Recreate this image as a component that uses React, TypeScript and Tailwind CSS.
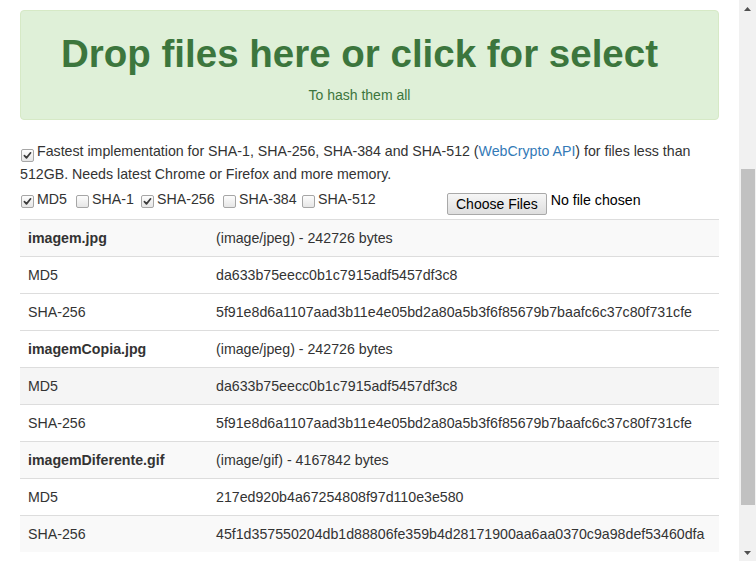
import React from 'react';

interface HashRow {
  label: string;
  value: string;
  bold?: boolean;
  bg?: string;
}

const rows: HashRow[] = [
  { label: 'imagem.jpg', value: '(image/jpeg) - 242726 bytes', bold: true, bg: 'bg-[#f9f9f9]' },
  { label: 'MD5', value: 'da633b75eecc0b1c7915adf5457df3c8' },
  { label: 'SHA-256', value: '5f91e8d6a1107aad3b11e4e05bd2a80a5b3f6f85679b7baafc6c37c80f731cfe' },
  { label: 'imagemCopia.jpg', value: '(image/jpeg) - 242726 bytes', bold: true },
  { label: 'MD5', value: 'da633b75eecc0b1c7915adf5457df3c8', bg: 'bg-[#f5f5f5]' },
  { label: 'SHA-256', value: '5f91e8d6a1107aad3b11e4e05bd2a80a5b3f6f85679b7baafc6c37c80f731cfe' },
  { label: 'imagemDiferente.gif', value: '(image/gif) - 4167842 bytes', bold: true, bg: 'bg-[#f9f9f9]' },
  { label: 'MD5', value: '217ed920b4a67254808f97d110e3e580' },
  { label: 'SHA-256', value: '45f1d357550204db1d88806fe359b4d28171900aa6aa0370c9a98def53460dfa', bg: 'bg-[#f9f9f9]' },
];

const algos = [
  { name: 'MD5', checked: true, width: 'w-[55px]' },
  { name: 'SHA-1', checked: false, width: 'w-[65px]' },
  { name: 'SHA-256', checked: true, width: 'w-[82px]' },
  { name: 'SHA-384', checked: false, width: 'w-[79px]' },
  { name: 'SHA-512', checked: false, width: 'w-[145px]' },
];

function Checkbox({ checked }: { checked: boolean }) {
  return (
    <span className="inline-flex items-center justify-center w-[13px] h-[13px] rounded-[2px] border border-[#a6a6a6] bg-gradient-to-b from-[#fdfdfd] to-[#e6e6e6] align-[-4px] shrink-0">
      {checked && (
        <svg width="9" height="9" viewBox="0 0 9 9">
          <path d="M1.4 4.6 L3.5 6.9 L7.6 1.8" fill="none" stroke="#3b3b3b" strokeWidth="1.7" strokeLinecap="round" strokeLinejoin="round" />
        </svg>
      )}
    </span>
  );
}

export default function App() {
  return (
    <div className="flex w-[756px] h-[561px] overflow-hidden bg-white text-[#333] text-[14.2px] font-['Liberation_Sans',Arial,sans-serif]">
      <div className="flex-1 h-[561px] overflow-hidden px-5 pt-[10px]">
        {/* Drop zone */}
        <div className="h-[110px] rounded-[4px] border border-[#d6e9c6] bg-[#dff0d8] text-[#3c763d] flex flex-col items-center pt-[22px] pr-[20px]">
          <h1 className="text-[38.5px] leading-[42px] font-bold">Drop files here or click for select</h1>
          <p className="mt-[10px] leading-5 text-[14px]">To hash them all</p>
        </div>

        <div className="mt-[20px] leading-[23px]">
          <span className="ml-px mr-[3px]">
            <Checkbox checked />
          </span>
          Fastest implementation for SHA-1, SHA-256, SHA-384 and SHA-512 (<a className="text-[#337ab7]">WebCrypto API</a>) for
          files less than 512GB. Needs latest Chrome or Firefox and more memory.
        </div>

        <div className="flex items-start h-[33px] pt-[3px] pl-px">
          {algos.map(a => (
            <label key={a.name} className={`flex items-center gap-[3px] leading-5 ${a.width}`}>
              <span className="pt-[5px] flex">
                <Checkbox checked={a.checked} />
              </span>
              <span>{a.name}</span>
            </label>
          ))}
          <div className="flex items-start gap-[4px] pt-[4px]">
            <button className="h-[22px] px-[8px] rounded-[2px] border border-[#a9a9a9] bg-gradient-to-b from-[#f6f6f6] to-[#dedede] text-[14px] leading-[18px] text-black">
              Choose Files
            </button>
            <span className="leading-5 -mt-[3px] text-black">No file chosen</span>
          </div>
        </div>

        <table className="w-full table-fixed border-collapse">
          <tbody>
            {rows.map((r, i) => (
              <tr key={i} className={r.bg ?? 'bg-white'}>
                <td className={`w-[188px] border-t border-[#ddd] px-2 py-2 leading-5 ${r.bold ? 'font-bold' : ''}`}>
                  {r.label}
                </td>
                <td className="border-t border-[#ddd] px-2 py-2 leading-5 whitespace-nowrap">{r.value}</td>
              </tr>
            ))}
          </tbody>
        </table>
      </div>

      {/* Scrollbar */}
      <div className="w-[17px] h-[561px] bg-[#f1f1f1] flex flex-col items-center">
        <div className="h-[17px] flex items-center justify-center">
          <svg width="7" height="4" viewBox="0 0 7 4">
            <path d="M0 4 L3.5 0 L7 4 Z" fill="#505050" />
          </svg>
        </div>
        <div className="mt-[152px] h-[336px] w-[14px] ml-[1px] bg-[#c1c1c1]" />
        <div className="flex-1" />
        <div className="h-[17px] flex items-center justify-center">
          <svg width="7" height="4" viewBox="0 0 7 4">
            <path d="M0 0 L7 0 L3.5 4 Z" fill="#505050" />
          </svg>
        </div>
      </div>
    </div>
  );
}
